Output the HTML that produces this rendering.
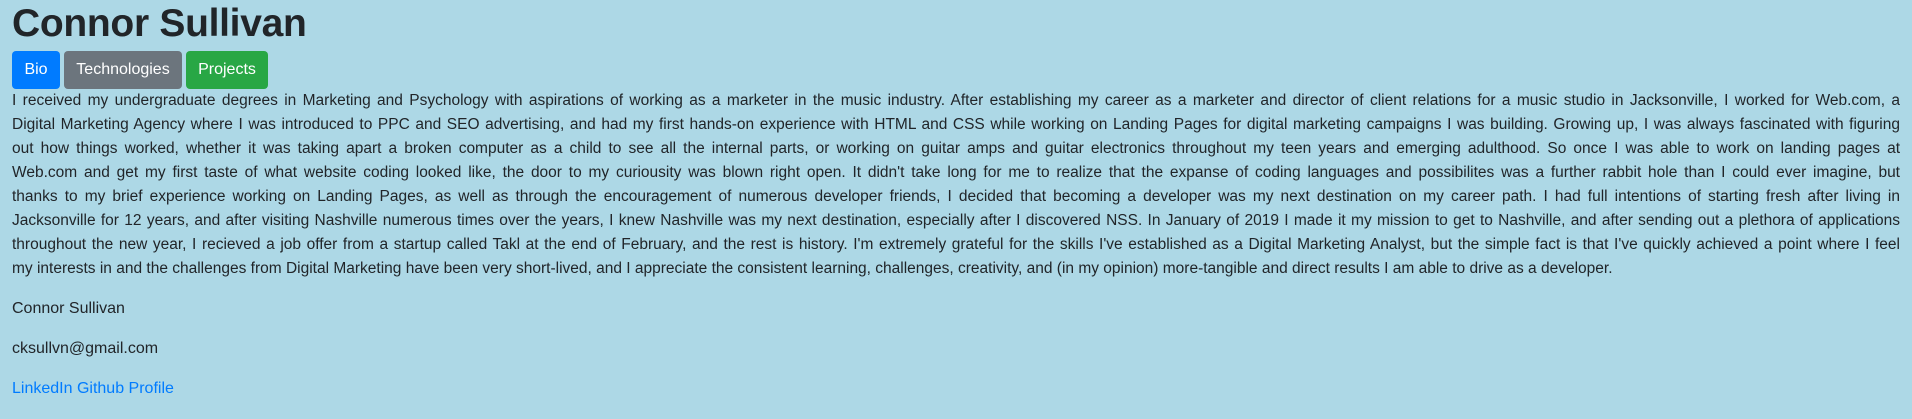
<!DOCTYPE html>
<html><head><meta charset="utf-8"><style>
body{margin:0;background:#add8e6;font-family:"Liberation Sans",sans-serif;color:#212529;width:1912px;height:419px;overflow:hidden}
.c{padding:0 12px}
h1{margin:0 0 3px;font-size:39px;font-weight:bold;line-height:48px;height:48px;letter-spacing:-0.3px}
.btns{display:flex;gap:4px;height:38px}
.b{display:inline-block;color:#fff;border-radius:4px;font-size:16px;line-height:38px;text-align:center;box-sizing:border-box}
p{margin:0 0 16px;font-size:16px;line-height:24px}
.bio{font-size:15.5px;line-height:24px;margin-bottom:16px}
.bio div{text-align:justify;text-align-last:justify;white-space:nowrap;overflow:hidden}
.bio div.l{text-align-last:left}
a{color:#007bff;text-decoration:none}
</style></head><body><div class="c">
<h1>Connor Sullivan</h1>
<div class="btns"><span class="b" style="background:#007bff;width:48px">Bio</span><span class="b" style="background:#6c757d;width:118px">Technologies</span><span class="b" style="background:#28a745;width:82px">Projects</span></div>
<div class="bio">
<div>I received my undergraduate degrees in Marketing and Psychology with aspirations of working as a marketer in the music industry. After establishing my career as a marketer and director of client relations for a music studio in Jacksonville, I worked for Web.com, a</div>
<div>Digital Marketing Agency where I was introduced to PPC and SEO advertising, and had my first hands-on experience with HTML and CSS while working on Landing Pages for digital marketing campaigns I was building. Growing up, I was always fascinated with figuring</div>
<div>out how things worked, whether it was taking apart a broken computer as a child to see all the internal parts, or working on guitar amps and guitar electronics throughout my teen years and emerging adulthood. So once I was able to work on landing pages at</div>
<div>Web.com and get my first taste of what website coding looked like, the door to my curiousity was blown right open. It didn't take long for me to realize that the expanse of coding languages and possibilites was a further rabbit hole than I could ever imagine, but</div>
<div>thanks to my brief experience working on Landing Pages, as well as through the encouragement of numerous developer friends, I decided that becoming a developer was my next destination on my career path. I had full intentions of starting fresh after living in</div>
<div>Jacksonville for 12 years, and after visiting Nashville numerous times over the years, I knew Nashville was my next destination, especially after I discovered NSS. In January of 2019 I made it my mission to get to Nashville, and after sending out a plethora of applications</div>
<div>throughout the new year, I recieved a job offer from a startup called Takl at the end of February, and the rest is history. I'm extremely grateful for the skills I've established as a Digital Marketing Analyst, but the simple fact is that I've quickly achieved a point where I feel</div>
<div class="l">my interests in and the challenges from Digital Marketing have been very short-lived, and I appreciate the consistent learning, challenges, creativity, and (in my opinion) more-tangible and direct results I am able to drive as a developer.</div>
</div>
<p>Connor Sullivan</p>
<p>cksullvn@gmail.com</p>
<p><a>LinkedIn</a> <a>Github Profile</a></p>
</div></body></html>
